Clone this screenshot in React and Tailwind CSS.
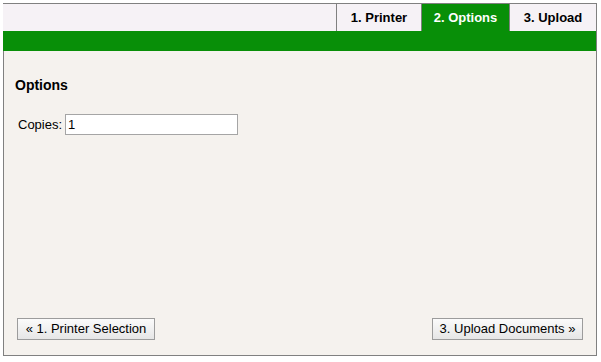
export default function App() {
  const tabs = [
    { label: '1. Printer', w: 'w-[85px]', active: false },
    { label: '2. Options', w: 'w-[88px]', active: true },
    { label: '3. Upload', w: 'w-[87px]', active: false },
  ];

  return (
    <div className="min-h-[362px] bg-white pt-[3px] pl-[3px] font-['Liberation_Sans',Arial,sans-serif] text-black">
      <div className="flex h-[353px] w-[594px] flex-col">
        {/* tab strip */}
        <div className="flex h-[28px] border-t border-r border-[#808080] bg-[#f6f2f6]">
          <div className="flex-1" />
          {tabs.map((t) => (
            <div
              key={t.label}
              className={`flex ${t.w} items-center justify-center border-l border-[#808080] text-[13px] font-bold ${
                t.active ? 'bg-[#088f08] text-white' : 'text-black'
              }`}
            >
              {t.label}
            </div>
          ))}
        </div>
        <div className="h-[20px] border-r border-[#808080] bg-[#088f08]" />

        {/* panel */}
        <div className="flex flex-1 flex-col border-x border-b border-[#808080] bg-[#f5f2ee] px-[11px] pt-[24px] pb-[15px]">
          <h2 className="text-[14px] leading-[20px] font-bold">Options</h2>
          <div className="mt-[19px] flex items-center pl-[3px] text-[13px]">
            <span className="mr-[3px]">Copies:</span>
            <input
              defaultValue="1"
              className="h-[21px] w-[173px] border border-[#a5a5a5] bg-white px-[2px] text-[13px] outline-none"
            />
          </div>
          <div className="mt-auto flex justify-between pl-[2px] pr-[2px]">
            <button className="h-[22px] w-[138px] border border-[#9c9c9c] bg-gradient-to-b from-[#fbfbfb] to-[#e6e6e6] text-[13px]">
              « 1. Printer Selection
            </button>
            <button className="h-[22px] w-[151px] border border-[#9c9c9c] bg-gradient-to-b from-[#fbfbfb] to-[#e6e6e6] text-[13px]">
              3. Upload Documents »
            </button>
          </div>
        </div>
      </div>
    </div>
  );
}
